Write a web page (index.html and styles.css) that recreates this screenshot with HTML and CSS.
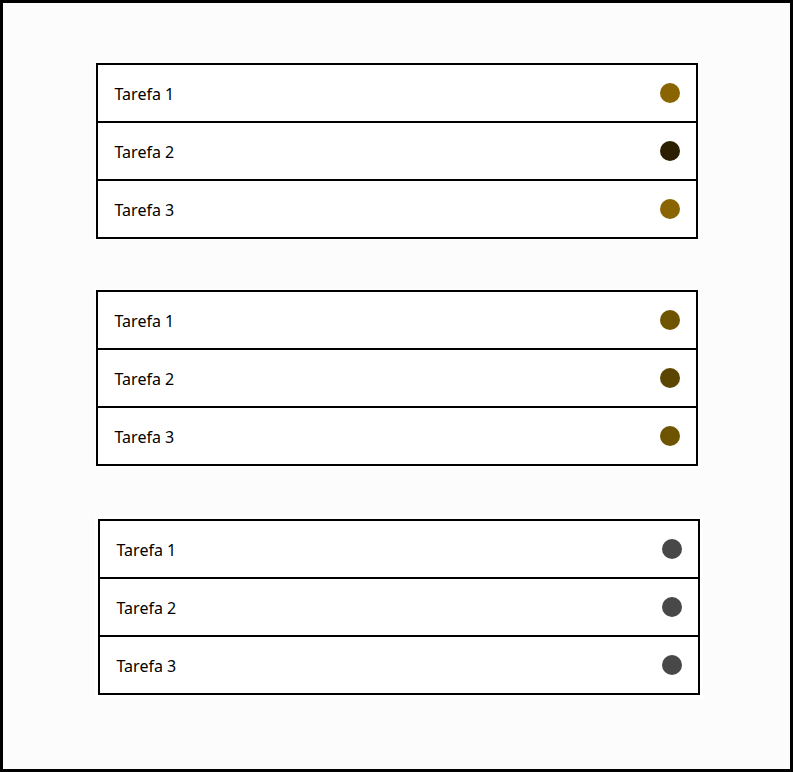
FILE: index.html
```html
<!DOCTYPE html>
<html lang="pt">
<head>
<meta charset="utf-8">
<title>Tarefas</title>
<link rel="stylesheet" href="styles.css">
</head>
<body>
<main class="page">
  <ul class="list">
    <li class="item"><span class="label">Tarefa 1</span><span class="dot dot-gold"></span></li>
    <li class="item"><span class="label">Tarefa 2</span><span class="dot dot-dark"></span></li>
    <li class="item"><span class="label">Tarefa 3</span><span class="dot dot-gold"></span></li>
  </ul>
  <ul class="list">
    <li class="item"><span class="label">Tarefa 1</span><span class="dot dot-olive"></span></li>
    <li class="item"><span class="label">Tarefa 2</span><span class="dot dot-brown"></span></li>
    <li class="item"><span class="label">Tarefa 3</span><span class="dot dot-olive"></span></li>
  </ul>
  <ul class="list list-raised">
    <li class="item"><span class="label">Tarefa 1</span><span class="dot dot-grey"></span></li>
    <li class="item"><span class="label">Tarefa 2</span><span class="dot dot-grey"></span></li>
    <li class="item"><span class="label">Tarefa 3</span><span class="dot dot-grey"></span></li>
  </ul>
</main>
</body>
</html>
```
FILE: styles.css
```css
html, body {
  margin: 0;
  padding: 0;
}
body {
  font-family: "Noto Sans", "Open Sans", sans-serif;
  color: #000;
  background: #fcfcfc;
}
.page {
  box-sizing: border-box;
  width: 793px;
  height: 772px;
  border: 3px solid #000;
  background: #fcfcfc;
  display: flex;
  flex-direction: column;
  align-items: center;
  gap: 51px;
  padding-top: 60px;
}
.list {
  list-style: none;
  margin: 0;
  padding: 0;
  width: 602px;
  box-sizing: border-box;
  border: 2px solid #000;
  background: #fff;
  box-shadow: 0 0 0 1px #fff;
}
.list-raised {
  transform: translate(2px, 2px);
  box-shadow: 0 0 0 3px #fff, 0 1px 0 3px #fff;
}
.item {
  height: 56px;
  display: flex;
  align-items: center;
  justify-content: space-between;
  padding: 0 16px;
  font-size: 16px;
}
.item + .item {
  border-top: 2px solid #000;
}
.label {
  line-height: 20px;
  padding: 2px 0 0 1px;
}
.dot {
  width: 20px;
  height: 20px;
  border-radius: 50%;
  flex: none;
}
.dot-gold { background: #8a6400; }
.dot-dark { background: #2b1f00; }
.dot-olive { background: #6e5300; }
.dot-brown { background: #5c4500; }
.dot-grey { background: #484848; }
```
